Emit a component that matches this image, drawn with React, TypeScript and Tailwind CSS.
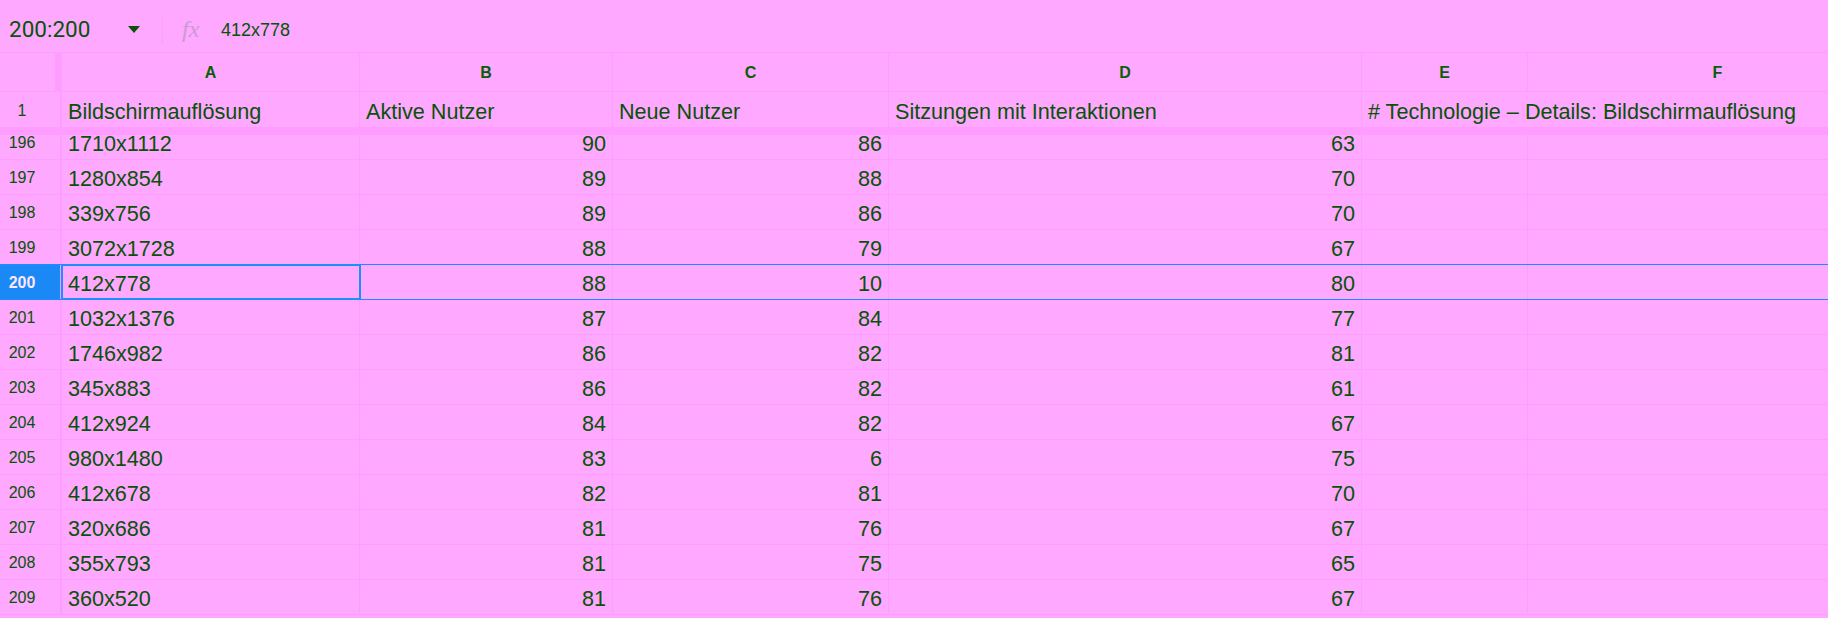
import React from "react";

type Row = [number, string, number, number, number];

const rows: Row[] = [
  [196, "1710x1112", 90, 86, 63],
  [197, "1280x854", 89, 88, 70],
  [198, "339x756", 89, 86, 70],
  [199, "3072x1728", 88, 79, 67],
  [200, "412x778", 88, 10, 80],
  [201, "1032x1376", 87, 84, 77],
  [202, "1746x982", 86, 82, 81],
  [203, "345x883", 86, 82, 61],
  [204, "412x924", 84, 82, 67],
  [205, "980x1480", 83, 6, 75],
  [206, "412x678", 82, 81, 70],
  [207, "320x686", 81, 76, 67],
  [208, "355x793", 81, 75, 65],
  [209, "360x520", 81, 76, 67],
];

const colW = ["w-[298px]", "w-[253px]", "w-[276px]", "w-[473px]", "w-[166px]", "w-[380px]"];
const letters = ["A", "B", "C", "D", "E", "F"];

const App: React.FC = () => {
  return (
    <div className="w-[1828px] h-[618px] overflow-hidden bg-[#ffa8ff] text-[#075207] font-['Liberation_Sans',Arial,sans-serif]">
      {/* Formula bar */}
      <div className="h-[53px] flex items-center pt-[7px] border-b border-[#ff9cff]">
        <div className="w-[120px] pl-[9px] text-[22.5px] font-['Roboto','Liberation_Sans',sans-serif] leading-none">200:200</div>
        <svg width="12" height="7" viewBox="0 0 12 7" className="ml-[8px]">
          <path d="M0 0 L12 0 L6 7 Z" fill="#075207" />
        </svg>
        <div className="ml-[22px] w-px h-[28px] bg-[#ff9cff]" />
        <div className="ml-[19px] w-[24px] text-[24px] leading-none italic font-['Liberation_Serif',serif] text-[#c99ad4] -mt-[2px]">fx</div>
        <div className="ml-[15px] text-[18px] leading-none">412x778</div>
      </div>

      {/* Column headers */}
      <div className="h-[39px] flex border-b border-[#ff9cff]">
        <div className="w-[62px] shrink-0 flex">
          <div className="w-[55px] border-r-[7px] border-[#ff9cff] box-content" />
        </div>
        {letters.map((l, i) => (
          <div
            key={l}
            className={`${colW[i]} shrink-0 flex items-center justify-center pt-[1px] border-r border-[#ff9cff] text-[16px] font-bold text-[#075e07]`}
          >
            {l}
          </div>
        ))}
      </div>

      {/* Frozen row 1 */}
      <div className="h-[35px] flex">
        <div className="w-[62px] shrink-0 flex items-center justify-center pr-[16px] pt-[2px] border-r-2 border-[#ff9cff] text-[16px]">1</div>
        {["Bildschirmauflösung", "Aktive Nutzer", "Neue Nutzer", "Sitzungen mit Interaktionen"].map((t, i) => (
          <div key={t} className={`${colW[i]} shrink-0 flex items-center px-[6px] pt-[5px] border-r border-[#ff9cff] text-[21.6px] whitespace-nowrap`}>
            {t}
          </div>
        ))}
        <div className={`${colW[4]} shrink-0 flex items-center px-[6px] pt-[5px] text-[21.6px] whitespace-nowrap overflow-visible relative z-10`}>
          # Technologie – Details: Bildschirmauflösung
        </div>
        <div className={`${colW[5]} shrink-0`} />
      </div>
      <div className="h-[8px] bg-[#ff9cff]" />

      {/* Body */}
      <div className="h-[483px] overflow-hidden">
        <div className="-mt-[10px]">
          {rows.map(([n, res, a, b, c]) => {
            const sel = n === 200;
            return (
              <div
                key={n}
                className={`h-[35px] flex border-b ${sel ? "border-[#1a8cff] relative" : "border-[#ff9cff]"}`}
              >
                {sel && <div className="absolute left-0 right-0 -top-px h-px bg-[#1a8cff]" />}
                <div
                  className={`w-[62px] shrink-0 flex items-center justify-center pr-[16px] pt-[2px] border-r-2 border-[#ff9cff] text-[16px] ${
                    sel ? "bg-[#1a88f5] text-[#ffe6ff] font-bold" : ""
                  }`}
                >
                  {n}
                </div>
                <div
                  className={`${colW[0]} shrink-0 flex items-center px-[6px] pt-[4px] text-[21.6px] ${
                    sel ? "outline-2 outline-[#1a90ff] -outline-offset-1 relative" : "border-r border-[#ff9cff]"
                  }`}
                >
                  {res}
                </div>
                {[a, b, c].map((v, i) => (
                  <div
                    key={i}
                    className={`${colW[i + 1]} shrink-0 flex items-center justify-end px-[6px] pt-[4px] border-r border-[#ff9cff] text-[21.6px]`}
                  >
                    {v}
                  </div>
                ))}
                <div className={`${colW[4]} shrink-0 border-r border-[#ff9cff]`} />
                <div className={`${colW[5]} shrink-0 border-r border-[#ff9cff]`} />
              </div>
            );
          })}
          <div className="h-[35px]" />
        </div>
      </div>
    </div>
  );
};

export default App;
